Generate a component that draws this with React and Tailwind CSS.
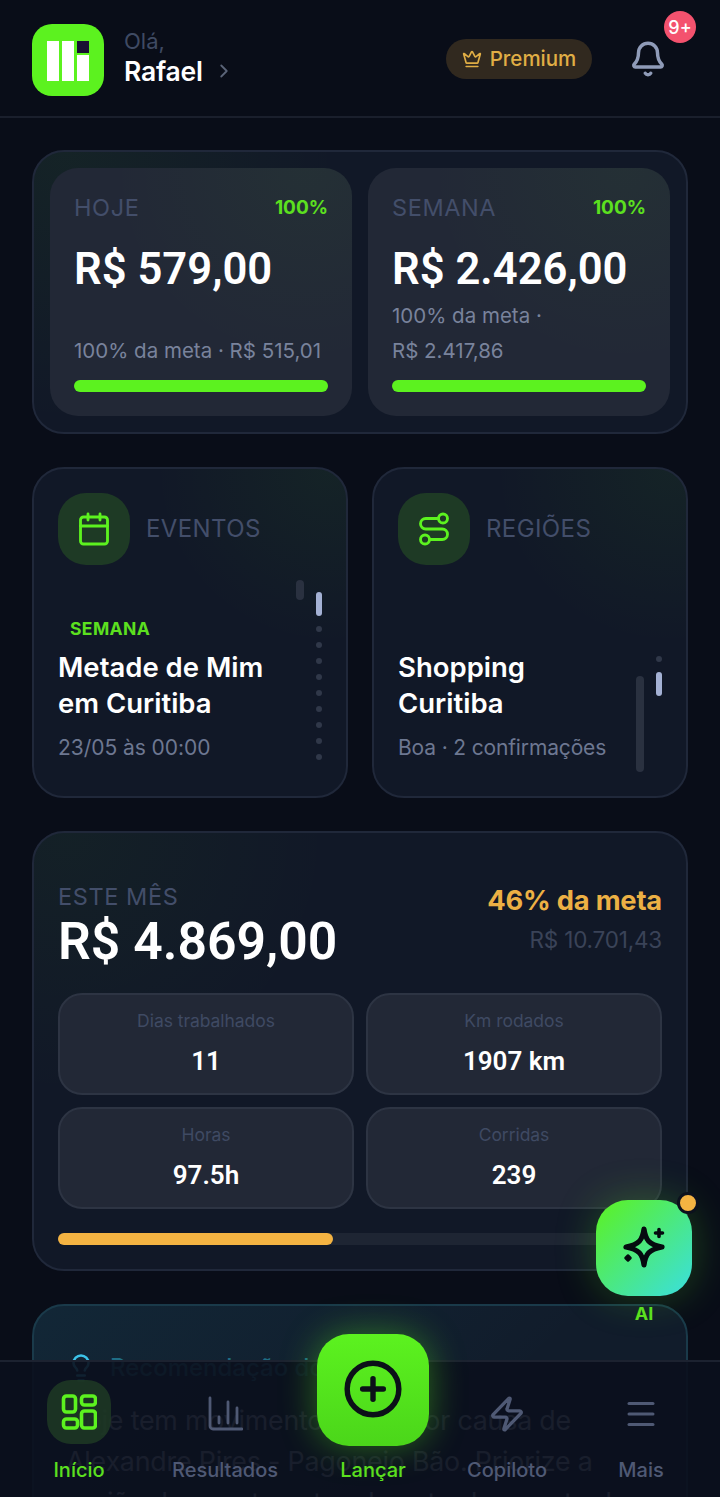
import React from "react";
import { Bell, Crown, Calendar, Route, Zap, Menu, CirclePlus, Lightbulb, ChevronRight } from "lucide-react";

const font = { fontFamily: "Inter, 'Noto Sans', sans-serif" };
const numFont = { fontFamily: "Roboto, 'Noto Sans', sans-serif" };

function Logo() {
  return (
    <div className="w-[72px] h-[72px] mt-[6px] rounded-[20px] bg-[#5cf21f] shrink-0 flex gap-[3px] pl-[15px] pt-[17px]">
      <div className="w-[12px] h-[40px] bg-white" />
      <div className="w-[12px] h-[40px] bg-white" />
      <div className="w-[12px] h-[40px] flex flex-col gap-[2px]">
        <div className="h-[12px] bg-[#1a1033]" />
        <div className="h-[26px] bg-white" />
      </div>
    </div>
  );
}

function Stat({ label, pct, amount, meta }) {
  return (
    <div className="flex-1 min-w-0 h-[248px] rounded-[28px] px-6 pb-6 pt-[24px] flex flex-col bg-[#222836] bg-[radial-gradient(circle_at_85%_0%,rgba(92,242,31,0.04),transparent_55%)]">
      <div className="flex justify-between items-center h-[32px]">
        <span className="text-[23.5px] tracking-[0.6px] text-[#434e6a]">{label}</span>
        <span className="text-[19px] font-bold text-[#5ce01f]">{pct}</span>
      </div>
      <div style={numFont} className="mt-[23px] text-[43.6px] leading-[46px] font-semibold text-white">{amount}</div>
      <div className="mt-auto text-[20.5px] leading-[35px] text-[#79839c]">{meta}</div>
      <div className="mt-[12px] h-[12px] rounded-full bg-[#5cf21f]" />
    </div>
  );
}

function Tile({ children }) {
  return (
    <div className="w-[72px] h-[72px] rounded-[28px] bg-[#1e3a25] flex items-center justify-center shrink-0">{children}</div>
  );
}

function Dots({ n }) {
  return (
    <div className="flex flex-col gap-[10px]">
      {Array.from({ length: n }).map((_, i) => (
        <div key={i} className="w-[6px] h-[6px] rounded-full bg-[#303849]" />
      ))}
    </div>
  );
}

function Metric({ label, value }) {
  return (
    <div className="h-[102px] rounded-[24px] bg-[#222836] border-2 border-[#2d3443] flex flex-col items-center pt-[14px]">
      <span className="text-[17.5px] leading-[24px] tracking-[-0.05px] text-[#3f4a63]">{label}</span>
      <span style={numFont} className="mt-[13px] text-[26px] leading-[30px] font-semibold text-white">{value}</span>
    </div>
  );
}

function NavItem({ w, label, active, icon }) {
  return (
    <div className={`${w} h-full flex flex-col items-center justify-end`}>
      {icon}
      <span className={`mt-[12px] text-[20px] leading-[28px] font-medium ${active ? "text-[#5ce01f]" : "text-[#4f5974]"}`}>{label}</span>
    </div>
  );
}

export default function App() {
  return (
    <div style={font} className="relative w-[720px] h-[1497px] overflow-hidden bg-[#090d18]">
      <header className="h-[118px] border-b-2 border-[#1a1f2c] flex items-center px-8 pb-[2px]">
        <Logo />
        <div className="ml-[20px] flex flex-col">
          <span className="text-[22px] leading-[28px] text-[#3f4a63]">Olá,</span>
          <span className="text-[26.5px] leading-[32px] font-semibold text-white flex items-center tracking-[-0.2px]">
            Rafael
            <ChevronRight className="ml-[10px] w-[22px] h-[22px] text-[#5a6478]" strokeWidth={2} />
          </span>
        </div>
        <div className="ml-auto mr-[37px] h-[40px] w-[146px] rounded-full bg-[#31291f] flex items-center justify-center gap-[8px] mt-[4px]">
          <Crown className="w-[20px] h-[20px] text-[#e0ae45]" strokeWidth={2} />
          <span className="text-[20.5px] font-medium text-[#e0ae45]">Premium</span>
        </div>
        <Bell className="w-[38px] h-[38px] text-[#8f9bb8] mr-[21px] mt-[4px]" strokeWidth={2.2} />
      </header>

      <main className="px-8 pt-[32px] flex flex-col gap-[33px]">
        <section className="h-[284px] rounded-[32px] border-2 border-[#20283a] bg-[#111827] bg-[radial-gradient(circle_at_5%_0%,rgba(92,242,31,0.05),transparent_40%)] px-4 flex items-center gap-4">
          <Stat label="HOJE" pct="100%" amount="R$ 579,00" meta="100% da meta · R$ 515,01" />
          <Stat label="SEMANA" pct="100%" amount="R$ 2.426,00" meta={<>100% da meta ·<br />R$ 2.417,86</>} />
        </section>

        <section className="flex gap-6">
          <div className="relative flex-1 h-[331px] rounded-[32px] border-2 border-[#20283a] bg-[#111827] bg-[radial-gradient(circle_at_95%_0%,rgba(92,242,31,0.05),transparent_40%)] px-6 pt-6 pb-[33px] flex flex-col">
            <div className="flex items-center gap-4">
              <Tile><Calendar className="w-[36px] h-[36px] text-[#5cf21f]" strokeWidth={1.9} /></Tile>
              <span className="text-[24px] tracking-[0.4px] text-[#434e6a]">EVENTOS</span>
            </div>
            <div className="mt-auto">
              <div className="ml-[12px] text-[17.5px] leading-[24px] font-bold tracking-[0.4px] text-[#5ce01f]">SEMANA</div>
              <div className="mt-[8px] text-[27.5px] leading-[36px] font-semibold text-white">Metade de Mim<br />em Curitiba</div>
              <div className="mt-[12px] text-[21px] leading-[30px] tracking-[-0.05px] text-[#6d7791]">23/05 às 00:00</div>
            </div>
            <div className="absolute left-[262px] top-[111px] w-[8px] h-[20px] rounded-full bg-[#2a3140]" />
            <div className="absolute left-[282px] top-[123px] flex flex-col items-center gap-[10px]">
              <div className="w-[6px] h-[24px] rounded-full bg-[#a4b1d4]" />
              <Dots n={9} />
            </div>
          </div>

          <div className="relative flex-1 h-[331px] rounded-[32px] border-2 border-[#20283a] bg-[#111827] bg-[radial-gradient(circle_at_95%_0%,rgba(92,242,31,0.05),transparent_40%)] px-6 pt-6 pb-[33px] flex flex-col">
            <div className="flex items-center gap-4">
              <Tile><Route className="w-[36px] h-[36px] text-[#5cf21f]" strokeWidth={1.9} /></Tile>
              <span className="text-[24px] tracking-[0.4px] text-[#434e6a]">REGIÕES</span>
            </div>
            <div className="mt-auto">
              <div className="text-[27.5px] leading-[36px] font-semibold text-white">Shopping<br />Curitiba</div>
              <div className="mt-[12px] text-[21px] leading-[30px] tracking-[-0.15px] text-[#6d7791]">Boa · 2 confirmações</div>
            </div>
            <div className="absolute left-[262px] top-[207px] w-[8px] h-[96px] rounded-full bg-[#2a3140]" />
            <div className="absolute left-[282px] top-[187px] flex flex-col items-center gap-[10px]">
              <Dots n={1} />
              <div className="w-[6px] h-[24px] rounded-full bg-[#a4b1d4]" />
            </div>
          </div>
        </section>

        <section className="h-[440px] rounded-[32px] border-2 border-[#20283a] bg-[#111827] bg-[radial-gradient(circle_at_5%_0%,rgba(92,242,31,0.04),transparent_35%)] px-6 pt-[49px]">
          <div className="flex justify-between">
            <div>
              <div className="text-[23.5px] leading-[30px] tracking-[0.6px] text-[#434e6a]">ESTE MÊS</div>
              <div style={numFont} className="text-[51.7px] leading-[60px] font-semibold text-white">R$ 4.869,00</div>
            </div>
            <div className="flex flex-col items-end pt-[1px]">
              <div className="text-[27.3px] leading-[36px] font-bold text-[#ecb044] tracking-[-0.2px]">46% da meta</div>
              <div className="mt-[5px] text-[22.5px] leading-[32px] tracking-[-0.2px] text-[#3a4358]">R$ 10.701,43</div>
            </div>
          </div>
          <div className="mt-[21px] grid grid-cols-2 gap-x-3 gap-y-3">
            <Metric label="Dias trabalhados" value="11" />
            <Metric label="Km rodados" value="1907 km" />
            <Metric label="Horas" value="97.5h" />
            <Metric label="Corridas" value="239" />
          </div>
          <div className="mt-[24px] h-[12px] rounded-full bg-[#1e2533]">
            <div className="h-full w-[275px] rounded-full bg-[#f4b342]" />
          </div>
        </section>

        <section className="h-[300px] rounded-[32px] border-2 border-[#1a3a4a] bg-[#111c2b] bg-[linear-gradient(135deg,rgba(34,211,238,0.06),transparent_60%)] px-[32px] pt-[44px]">
          <div className="flex items-center gap-[14px]">
            <Lightbulb className="w-[30px] h-[30px] text-[#3cc3e8]" strokeWidth={2} />
            <span className="text-[24px] font-medium text-[#1f6d85]">Recomendação do dia</span>
          </div>
          <p className="mt-[14px] text-[26.8px] leading-[41px] text-[#94a3b8] tracking-[-0.2px] whitespace-nowrap">
            Hoje tem movimento maior por causa de<br />
            Alexandre Pires - Pagonejo Bão. Priorize a<br />
            região do evento antes da entrada e perto da
          </p>
        </section>
      </main>

      <nav className="absolute left-0 right-0 bottom-0 h-[137px] bg-[#0b0f1d]/90 border-t-2 border-[#1c2230] flex pl-[32px] pb-[13px]">
        <NavItem w="w-[94px]" label="Início" active icon={
          <div className="w-[64px] h-[64px] rounded-[24px] bg-[#1e3a25]/85 flex items-center justify-center">
            <svg width="36" height="36" viewBox="0 0 36 36" fill="none" stroke="#5cf21f" strokeWidth="3.6" strokeLinejoin="round">
              <rect x="2.5" y="2" width="12" height="16" rx="3" />
              <rect x="20.5" y="2" width="14" height="9" rx="3" />
              <rect x="2.5" y="25" width="14" height="9" rx="3" />
              <rect x="20.5" y="17" width="14" height="17" rx="3" />
            </svg>
          </div>
        } />
        <NavItem w="w-[198px]" label="Resultados" icon={
          <div className="h-[64px] flex items-center pt-[4px]">
            <svg width="36" height="36" viewBox="0 0 36 36" fill="none" stroke="#4f5974" strokeWidth="2.8" strokeLinecap="round" strokeLinejoin="round">
              <path d="M3 2v28a3 3 0 0 0 3 3h29" />
              <path d="M12 21v6M21 6v21M30 12v15" />
            </svg>
          </div>
        } />
        <NavItem w="w-[98px]" label="Lançar" active icon={<div className="h-[64px]" />} />
        <NavItem w="w-[170px]" label="Copiloto" icon={
          <div className="h-[64px] flex items-center pt-[4px]">
            <Zap className="w-[38px] h-[38px] text-[#4f5974]" strokeWidth={2.1} />
          </div>
        } />
        <NavItem w="w-[98px]" label="Mais" icon={
          <div className="h-[64px] flex items-center pt-[4px]">
            <Menu className="w-[36px] h-[36px] text-[#4f5974]" strokeWidth={2} />
          </div>
        } />
      </nav>

      <div className="absolute left-[317px] top-[1334px] w-[112px] h-[112px] rounded-[32px] bg-[linear-gradient(180deg,#5cf21f,#4bd61a)] shadow-[0_0_36px_rgba(92,242,31,0.4)] flex items-center justify-center">
        <CirclePlus className="w-[62px] h-[62px] text-[#0b1018] -translate-y-[1px]" strokeWidth={2.1} />
      </div>

      <div className="absolute left-[596px] top-[1200px] w-[96px] flex flex-col items-center">
        <div className="relative w-[96px] h-[96px] rounded-[32px] bg-[linear-gradient(135deg,#5cf21f,#3adfe0)] shadow-[0_0_40px_rgba(92,242,31,0.25)] flex items-center justify-center">
          <svg width="48" height="48" viewBox="0 0 48 48" fill="none" stroke="#050a0f" strokeWidth="5.2" strokeLinejoin="round" strokeLinecap="round">
            <path d="M24 5c1.5 11 5 15.5 18 18-13 2.5-16.5 7-18 18-1.5-11-5-15.5-18-18 13-2.5 16.5-7 18-18Z" />
            <path d="M39 5.5v7M35.5 9h7" strokeWidth="3.6" />
            <path d="M8 31.5l2.5 2.5-2.5 2.5-2.5-2.5Z" fill="#050a0f" strokeWidth="2.5" />
          </svg>
          <div className="absolute -right-[7px] -top-[8px] w-[22px] h-[22px] rounded-full bg-[#f4b342] border-[3px] border-[#0c111d]" />
        </div>
        <span className="mt-[4px] text-[18px] leading-[28px] font-bold text-[#5ce01f]">AI</span>
      </div>

      <div className="absolute left-[664px] top-[11px] w-[32px] h-[32px] rounded-full bg-[#f4526e] flex items-center justify-center text-[18px] font-medium text-white">9+</div>
    </div>
  );
}
